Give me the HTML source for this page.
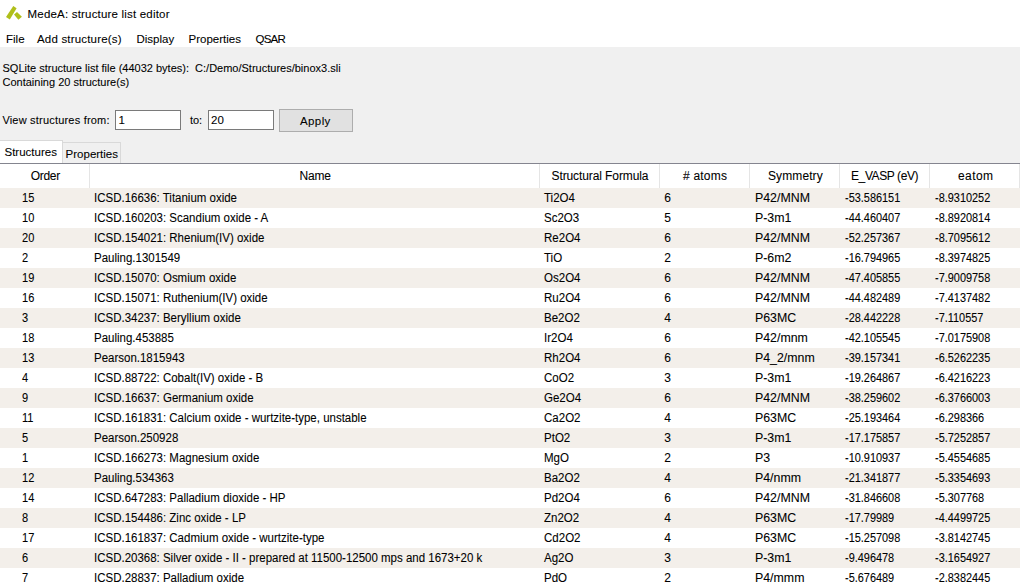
<!DOCTYPE html>
<html><head><meta charset="utf-8"><style>
html,body{margin:0;padding:0;}
body{width:1020px;height:586px;overflow:hidden;position:relative;background:#f0f0f0;font-family:"Liberation Sans",sans-serif;color:#000;}
.t{position:absolute;white-space:nowrap;line-height:1;-webkit-text-stroke:0.08px #000;}
.b{position:absolute;box-sizing:border-box;}
</style></head><body>
<div class="b" style="left:0;top:0;width:1020px;height:47px;background:#fff"></div>
<svg class="b" style="left:0;top:0" width="30" height="26" viewBox="0 0 30 26">
<polygon points="13.3,6.0 16.6,8.2 9.8,19.5 6.0,16.9" fill="#b0bf1a"/>
<polygon points="17,11.9 14.0,14.4 18.4,19.7 21.9,16.7" fill="#b0bf1a"/>
</svg>
<div class="t" style="left:27.60px;top:8.57px;font-size:11.5px;letter-spacing:0.19px">MedeA: structure list editor</div>
<div class="t" style="left:6.00px;top:33.57px;font-size:11.5px;">File</div>
<div class="t" style="left:37.00px;top:33.57px;font-size:11.5px;letter-spacing:0.18px">Add structure(s)</div>
<div class="t" style="left:136.50px;top:33.57px;font-size:11.5px;">Display</div>
<div class="t" style="left:188.50px;top:33.57px;font-size:11.5px;">Properties</div>
<div class="t" style="left:255.60px;top:33.57px;font-size:11.5px;letter-spacing:-0.8px">QSAR</div>
<div class="t" style="left:2.50px;top:63.39px;font-size:11px;white-space:pre">SQLite structure list file (44032 bytes):  C:/Demo/Structures/binox3.sli</div>
<div class="t" style="left:2.50px;top:77.29px;font-size:11px;">Containing 20 structure(s)</div>
<div class="t" style="left:2.40px;top:115.49px;font-size:11px;letter-spacing:0.2px">View structures from:</div>
<div class="t" style="left:189.90px;top:115.49px;font-size:11px;">to:</div>
<div class="b" style="left:115px;top:110px;width:66px;height:20px;background:#fff;border:1px solid #7a7a7a"></div>
<div class="t" style="left:118.50px;top:115.07px;font-size:11.5px;">1</div>
<div class="b" style="left:208px;top:110px;width:66px;height:20px;background:#fff;border:1px solid #7a7a7a"></div>
<div class="t" style="left:211.00px;top:115.07px;font-size:11.5px;">20</div>
<div class="b" style="left:279px;top:109px;width:74px;height:23px;background:#e1e1e1;border:1px solid #adadad"></div>
<div class="t" style="left:300.00px;top:115.57px;font-size:11.5px;letter-spacing:0.4px">Apply</div>
<div class="b" style="left:62px;top:142px;width:59px;height:21px;background:#f0f0f0;border:1px solid #d9d9d9;border-bottom:none;"></div>
<div class="t" style="left:65.60px;top:148.87px;font-size:11.5px;">Properties</div>
<div class="b" style="left:0px;top:140px;width:63px;height:23px;background:#ffffff;border:1px solid #d9d9d9;border-bottom:none;border-left:none"></div>
<div class="t" style="left:4.50px;top:146.77px;font-size:11.5px;">Structures</div>
<div class="b" style="left:0;top:163px;width:1020px;height:1px;background:#84858f"></div>
<div class="b" style="left:0;top:164px;width:1020px;height:422px;background:#fff"></div>
<div class="b" style="left:89px;top:164px;width:1px;height:24px;background:#e5e5e5"></div>
<div class="b" style="left:539px;top:164px;width:1px;height:24px;background:#e5e5e5"></div>
<div class="b" style="left:659px;top:164px;width:1px;height:24px;background:#e5e5e5"></div>
<div class="b" style="left:749px;top:164px;width:1px;height:24px;background:#e5e5e5"></div>
<div class="b" style="left:839px;top:164px;width:1px;height:24px;background:#e5e5e5"></div>
<div class="b" style="left:929px;top:164px;width:1px;height:24px;background:#e5e5e5"></div>
<div class="b" style="left:1019px;top:164px;width:1px;height:24px;background:#e5e5e5"></div>
<div class="t" style="left:30.70px;top:169.84px;font-size:12px;letter-spacing:-0.3px">Order</div>
<div class="t" style="left:299.50px;top:169.84px;font-size:12px;letter-spacing:-0.2px">Name</div>
<div class="t" style="left:551.50px;top:169.84px;font-size:12px;letter-spacing:-0.1px">Structural Formula</div>
<div class="t" style="left:683.00px;top:169.84px;font-size:12px;letter-spacing:0.2px"># atoms</div>
<div class="t" style="left:768.00px;top:169.84px;font-size:12px;letter-spacing:0.1px">Symmetry</div>
<div class="t" style="left:851.00px;top:169.84px;font-size:12px;letter-spacing:-0.4px">E_VASP (eV)</div>
<div class="t" style="left:958.00px;top:169.84px;font-size:12px;letter-spacing:0.4px">eatom</div>
<div class="b" style="left:0;top:188px;width:1020px;height:20px;background:#f3efea"></div>
<div class="t" style="left:22.00px;top:191.74px;font-size:12px;transform:scaleX(0.92);transform-origin:0 0">15</div>
<div class="t" style="left:94.00px;top:191.74px;font-size:12px;transform:scaleX(0.957);transform-origin:0 0">ICSD.16636: Titanium oxide</div>
<div class="t" style="left:543.80px;top:191.74px;font-size:12px;transform:scaleX(0.96);transform-origin:0 0">Ti2O4</div>
<div class="t" style="left:664.20px;top:191.74px;font-size:12px;">6</div>
<div class="t" style="left:754.90px;top:191.74px;font-size:12px;transform:scaleX(1.03);transform-origin:0 0">P42/MNM</div>
<div class="t" style="left:845.00px;top:191.74px;font-size:12px;transform:scaleX(0.91);transform-origin:0 0">-53.586151</div>
<div class="t" style="left:935.40px;top:191.74px;font-size:12px;transform:scaleX(0.91);transform-origin:0 0">-8.9310252</div>
<div class="t" style="left:22.00px;top:211.74px;font-size:12px;transform:scaleX(0.92);transform-origin:0 0">10</div>
<div class="t" style="left:94.00px;top:211.74px;font-size:12px;transform:scaleX(0.957);transform-origin:0 0">ICSD.160203: Scandium oxide - A</div>
<div class="t" style="left:543.80px;top:211.74px;font-size:12px;transform:scaleX(0.96);transform-origin:0 0">Sc2O3</div>
<div class="t" style="left:664.20px;top:211.74px;font-size:12px;">5</div>
<div class="t" style="left:754.90px;top:211.74px;font-size:12px;transform:scaleX(1.03);transform-origin:0 0">P-3m1</div>
<div class="t" style="left:845.00px;top:211.74px;font-size:12px;transform:scaleX(0.91);transform-origin:0 0">-44.460407</div>
<div class="t" style="left:935.40px;top:211.74px;font-size:12px;transform:scaleX(0.91);transform-origin:0 0">-8.8920814</div>
<div class="b" style="left:0;top:228px;width:1020px;height:20px;background:#f3efea"></div>
<div class="t" style="left:22.00px;top:231.74px;font-size:12px;transform:scaleX(0.92);transform-origin:0 0">20</div>
<div class="t" style="left:94.00px;top:231.74px;font-size:12px;transform:scaleX(0.957);transform-origin:0 0">ICSD.154021: Rhenium(IV) oxide</div>
<div class="t" style="left:543.80px;top:231.74px;font-size:12px;transform:scaleX(0.96);transform-origin:0 0">Re2O4</div>
<div class="t" style="left:664.20px;top:231.74px;font-size:12px;">6</div>
<div class="t" style="left:754.90px;top:231.74px;font-size:12px;transform:scaleX(1.03);transform-origin:0 0">P42/MNM</div>
<div class="t" style="left:845.00px;top:231.74px;font-size:12px;transform:scaleX(0.91);transform-origin:0 0">-52.257367</div>
<div class="t" style="left:935.40px;top:231.74px;font-size:12px;transform:scaleX(0.91);transform-origin:0 0">-8.7095612</div>
<div class="t" style="left:22.00px;top:251.74px;font-size:12px;transform:scaleX(0.92);transform-origin:0 0">2</div>
<div class="t" style="left:94.00px;top:251.74px;font-size:12px;transform:scaleX(0.957);transform-origin:0 0">Pauling.1301549</div>
<div class="t" style="left:543.80px;top:251.74px;font-size:12px;transform:scaleX(0.96);transform-origin:0 0">TiO</div>
<div class="t" style="left:664.20px;top:251.74px;font-size:12px;">2</div>
<div class="t" style="left:754.90px;top:251.74px;font-size:12px;transform:scaleX(1.03);transform-origin:0 0">P-6m2</div>
<div class="t" style="left:845.00px;top:251.74px;font-size:12px;transform:scaleX(0.91);transform-origin:0 0">-16.794965</div>
<div class="t" style="left:935.40px;top:251.74px;font-size:12px;transform:scaleX(0.91);transform-origin:0 0">-8.3974825</div>
<div class="b" style="left:0;top:268px;width:1020px;height:20px;background:#f3efea"></div>
<div class="t" style="left:22.00px;top:271.74px;font-size:12px;transform:scaleX(0.92);transform-origin:0 0">19</div>
<div class="t" style="left:94.00px;top:271.74px;font-size:12px;transform:scaleX(0.957);transform-origin:0 0">ICSD.15070: Osmium oxide</div>
<div class="t" style="left:543.80px;top:271.74px;font-size:12px;transform:scaleX(0.96);transform-origin:0 0">Os2O4</div>
<div class="t" style="left:664.20px;top:271.74px;font-size:12px;">6</div>
<div class="t" style="left:754.90px;top:271.74px;font-size:12px;transform:scaleX(1.03);transform-origin:0 0">P42/MNM</div>
<div class="t" style="left:845.00px;top:271.74px;font-size:12px;transform:scaleX(0.91);transform-origin:0 0">-47.405855</div>
<div class="t" style="left:935.40px;top:271.74px;font-size:12px;transform:scaleX(0.91);transform-origin:0 0">-7.9009758</div>
<div class="t" style="left:22.00px;top:291.74px;font-size:12px;transform:scaleX(0.92);transform-origin:0 0">16</div>
<div class="t" style="left:94.00px;top:291.74px;font-size:12px;transform:scaleX(0.957);transform-origin:0 0">ICSD.15071: Ruthenium(IV) oxide</div>
<div class="t" style="left:543.80px;top:291.74px;font-size:12px;transform:scaleX(0.96);transform-origin:0 0">Ru2O4</div>
<div class="t" style="left:664.20px;top:291.74px;font-size:12px;">6</div>
<div class="t" style="left:754.90px;top:291.74px;font-size:12px;transform:scaleX(1.03);transform-origin:0 0">P42/MNM</div>
<div class="t" style="left:845.00px;top:291.74px;font-size:12px;transform:scaleX(0.91);transform-origin:0 0">-44.482489</div>
<div class="t" style="left:935.40px;top:291.74px;font-size:12px;transform:scaleX(0.91);transform-origin:0 0">-7.4137482</div>
<div class="b" style="left:0;top:308px;width:1020px;height:20px;background:#f3efea"></div>
<div class="t" style="left:22.00px;top:311.74px;font-size:12px;transform:scaleX(0.92);transform-origin:0 0">3</div>
<div class="t" style="left:94.00px;top:311.74px;font-size:12px;transform:scaleX(0.957);transform-origin:0 0">ICSD.34237: Beryllium oxide</div>
<div class="t" style="left:543.80px;top:311.74px;font-size:12px;transform:scaleX(0.96);transform-origin:0 0">Be2O2</div>
<div class="t" style="left:664.20px;top:311.74px;font-size:12px;">4</div>
<div class="t" style="left:754.90px;top:311.74px;font-size:12px;transform:scaleX(1.03);transform-origin:0 0">P63MC</div>
<div class="t" style="left:845.00px;top:311.74px;font-size:12px;transform:scaleX(0.91);transform-origin:0 0">-28.442228</div>
<div class="t" style="left:935.40px;top:311.74px;font-size:12px;transform:scaleX(0.91);transform-origin:0 0">-7.110557</div>
<div class="t" style="left:22.00px;top:331.74px;font-size:12px;transform:scaleX(0.92);transform-origin:0 0">18</div>
<div class="t" style="left:94.00px;top:331.74px;font-size:12px;transform:scaleX(0.957);transform-origin:0 0">Pauling.453885</div>
<div class="t" style="left:543.80px;top:331.74px;font-size:12px;transform:scaleX(0.96);transform-origin:0 0">Ir2O4</div>
<div class="t" style="left:664.20px;top:331.74px;font-size:12px;">6</div>
<div class="t" style="left:754.90px;top:331.74px;font-size:12px;transform:scaleX(1.03);transform-origin:0 0">P42/mnm</div>
<div class="t" style="left:845.00px;top:331.74px;font-size:12px;transform:scaleX(0.91);transform-origin:0 0">-42.105545</div>
<div class="t" style="left:935.40px;top:331.74px;font-size:12px;transform:scaleX(0.91);transform-origin:0 0">-7.0175908</div>
<div class="b" style="left:0;top:348px;width:1020px;height:20px;background:#f3efea"></div>
<div class="t" style="left:22.00px;top:351.74px;font-size:12px;transform:scaleX(0.92);transform-origin:0 0">13</div>
<div class="t" style="left:94.00px;top:351.74px;font-size:12px;transform:scaleX(0.957);transform-origin:0 0">Pearson.1815943</div>
<div class="t" style="left:543.80px;top:351.74px;font-size:12px;transform:scaleX(0.96);transform-origin:0 0">Rh2O4</div>
<div class="t" style="left:664.20px;top:351.74px;font-size:12px;">6</div>
<div class="t" style="left:754.90px;top:351.74px;font-size:12px;transform:scaleX(1.03);transform-origin:0 0">P4_2/mnm</div>
<div class="t" style="left:845.00px;top:351.74px;font-size:12px;transform:scaleX(0.91);transform-origin:0 0">-39.157341</div>
<div class="t" style="left:935.40px;top:351.74px;font-size:12px;transform:scaleX(0.91);transform-origin:0 0">-6.5262235</div>
<div class="t" style="left:22.00px;top:371.74px;font-size:12px;transform:scaleX(0.92);transform-origin:0 0">4</div>
<div class="t" style="left:94.00px;top:371.74px;font-size:12px;transform:scaleX(0.957);transform-origin:0 0">ICSD.88722: Cobalt(IV) oxide - B</div>
<div class="t" style="left:543.80px;top:371.74px;font-size:12px;transform:scaleX(0.96);transform-origin:0 0">CoO2</div>
<div class="t" style="left:664.20px;top:371.74px;font-size:12px;">3</div>
<div class="t" style="left:754.90px;top:371.74px;font-size:12px;transform:scaleX(1.03);transform-origin:0 0">P-3m1</div>
<div class="t" style="left:845.00px;top:371.74px;font-size:12px;transform:scaleX(0.91);transform-origin:0 0">-19.264867</div>
<div class="t" style="left:935.40px;top:371.74px;font-size:12px;transform:scaleX(0.91);transform-origin:0 0">-6.4216223</div>
<div class="b" style="left:0;top:388px;width:1020px;height:20px;background:#f3efea"></div>
<div class="t" style="left:22.00px;top:391.74px;font-size:12px;transform:scaleX(0.92);transform-origin:0 0">9</div>
<div class="t" style="left:94.00px;top:391.74px;font-size:12px;transform:scaleX(0.957);transform-origin:0 0">ICSD.16637: Germanium oxide</div>
<div class="t" style="left:543.80px;top:391.74px;font-size:12px;transform:scaleX(0.96);transform-origin:0 0">Ge2O4</div>
<div class="t" style="left:664.20px;top:391.74px;font-size:12px;">6</div>
<div class="t" style="left:754.90px;top:391.74px;font-size:12px;transform:scaleX(1.03);transform-origin:0 0">P42/MNM</div>
<div class="t" style="left:845.00px;top:391.74px;font-size:12px;transform:scaleX(0.91);transform-origin:0 0">-38.259602</div>
<div class="t" style="left:935.40px;top:391.74px;font-size:12px;transform:scaleX(0.91);transform-origin:0 0">-6.3766003</div>
<div class="t" style="left:22.00px;top:411.74px;font-size:12px;transform:scaleX(0.92);transform-origin:0 0">11</div>
<div class="t" style="left:94.00px;top:411.74px;font-size:12px;transform:scaleX(0.957);transform-origin:0 0">ICSD.161831: Calcium oxide - wurtzite-type, unstable</div>
<div class="t" style="left:543.80px;top:411.74px;font-size:12px;transform:scaleX(0.96);transform-origin:0 0">Ca2O2</div>
<div class="t" style="left:664.20px;top:411.74px;font-size:12px;">4</div>
<div class="t" style="left:754.90px;top:411.74px;font-size:12px;transform:scaleX(1.03);transform-origin:0 0">P63MC</div>
<div class="t" style="left:845.00px;top:411.74px;font-size:12px;transform:scaleX(0.91);transform-origin:0 0">-25.193464</div>
<div class="t" style="left:935.40px;top:411.74px;font-size:12px;transform:scaleX(0.91);transform-origin:0 0">-6.298366</div>
<div class="b" style="left:0;top:428px;width:1020px;height:20px;background:#f3efea"></div>
<div class="t" style="left:22.00px;top:431.74px;font-size:12px;transform:scaleX(0.92);transform-origin:0 0">5</div>
<div class="t" style="left:94.00px;top:431.74px;font-size:12px;transform:scaleX(0.957);transform-origin:0 0">Pearson.250928</div>
<div class="t" style="left:543.80px;top:431.74px;font-size:12px;transform:scaleX(0.96);transform-origin:0 0">PtO2</div>
<div class="t" style="left:664.20px;top:431.74px;font-size:12px;">3</div>
<div class="t" style="left:754.90px;top:431.74px;font-size:12px;transform:scaleX(1.03);transform-origin:0 0">P-3m1</div>
<div class="t" style="left:845.00px;top:431.74px;font-size:12px;transform:scaleX(0.91);transform-origin:0 0">-17.175857</div>
<div class="t" style="left:935.40px;top:431.74px;font-size:12px;transform:scaleX(0.91);transform-origin:0 0">-5.7252857</div>
<div class="t" style="left:22.00px;top:451.74px;font-size:12px;transform:scaleX(0.92);transform-origin:0 0">1</div>
<div class="t" style="left:94.00px;top:451.74px;font-size:12px;transform:scaleX(0.957);transform-origin:0 0">ICSD.166273: Magnesium oxide</div>
<div class="t" style="left:543.80px;top:451.74px;font-size:12px;transform:scaleX(0.96);transform-origin:0 0">MgO</div>
<div class="t" style="left:664.20px;top:451.74px;font-size:12px;">2</div>
<div class="t" style="left:754.90px;top:451.74px;font-size:12px;transform:scaleX(1.03);transform-origin:0 0">P3</div>
<div class="t" style="left:845.00px;top:451.74px;font-size:12px;transform:scaleX(0.91);transform-origin:0 0">-10.910937</div>
<div class="t" style="left:935.40px;top:451.74px;font-size:12px;transform:scaleX(0.91);transform-origin:0 0">-5.4554685</div>
<div class="b" style="left:0;top:468px;width:1020px;height:20px;background:#f3efea"></div>
<div class="t" style="left:22.00px;top:471.74px;font-size:12px;transform:scaleX(0.92);transform-origin:0 0">12</div>
<div class="t" style="left:94.00px;top:471.74px;font-size:12px;transform:scaleX(0.957);transform-origin:0 0">Pauling.534363</div>
<div class="t" style="left:543.80px;top:471.74px;font-size:12px;transform:scaleX(0.96);transform-origin:0 0">Ba2O2</div>
<div class="t" style="left:664.20px;top:471.74px;font-size:12px;">4</div>
<div class="t" style="left:754.90px;top:471.74px;font-size:12px;transform:scaleX(1.03);transform-origin:0 0">P4/nmm</div>
<div class="t" style="left:845.00px;top:471.74px;font-size:12px;transform:scaleX(0.91);transform-origin:0 0">-21.341877</div>
<div class="t" style="left:935.40px;top:471.74px;font-size:12px;transform:scaleX(0.91);transform-origin:0 0">-5.3354693</div>
<div class="t" style="left:22.00px;top:491.74px;font-size:12px;transform:scaleX(0.92);transform-origin:0 0">14</div>
<div class="t" style="left:94.00px;top:491.74px;font-size:12px;transform:scaleX(0.957);transform-origin:0 0">ICSD.647283: Palladium dioxide - HP</div>
<div class="t" style="left:543.80px;top:491.74px;font-size:12px;transform:scaleX(0.96);transform-origin:0 0">Pd2O4</div>
<div class="t" style="left:664.20px;top:491.74px;font-size:12px;">6</div>
<div class="t" style="left:754.90px;top:491.74px;font-size:12px;transform:scaleX(1.03);transform-origin:0 0">P42/MNM</div>
<div class="t" style="left:845.00px;top:491.74px;font-size:12px;transform:scaleX(0.91);transform-origin:0 0">-31.846608</div>
<div class="t" style="left:935.40px;top:491.74px;font-size:12px;transform:scaleX(0.91);transform-origin:0 0">-5.307768</div>
<div class="b" style="left:0;top:508px;width:1020px;height:20px;background:#f3efea"></div>
<div class="t" style="left:22.00px;top:511.74px;font-size:12px;transform:scaleX(0.92);transform-origin:0 0">8</div>
<div class="t" style="left:94.00px;top:511.74px;font-size:12px;transform:scaleX(0.957);transform-origin:0 0">ICSD.154486: Zinc oxide - LP</div>
<div class="t" style="left:543.80px;top:511.74px;font-size:12px;transform:scaleX(0.96);transform-origin:0 0">Zn2O2</div>
<div class="t" style="left:664.20px;top:511.74px;font-size:12px;">4</div>
<div class="t" style="left:754.90px;top:511.74px;font-size:12px;transform:scaleX(1.03);transform-origin:0 0">P63MC</div>
<div class="t" style="left:845.00px;top:511.74px;font-size:12px;transform:scaleX(0.91);transform-origin:0 0">-17.79989</div>
<div class="t" style="left:935.40px;top:511.74px;font-size:12px;transform:scaleX(0.91);transform-origin:0 0">-4.4499725</div>
<div class="t" style="left:22.00px;top:531.74px;font-size:12px;transform:scaleX(0.92);transform-origin:0 0">17</div>
<div class="t" style="left:94.00px;top:531.74px;font-size:12px;transform:scaleX(0.957);transform-origin:0 0">ICSD.161837: Cadmium oxide - wurtzite-type</div>
<div class="t" style="left:543.80px;top:531.74px;font-size:12px;transform:scaleX(0.96);transform-origin:0 0">Cd2O2</div>
<div class="t" style="left:664.20px;top:531.74px;font-size:12px;">4</div>
<div class="t" style="left:754.90px;top:531.74px;font-size:12px;transform:scaleX(1.03);transform-origin:0 0">P63MC</div>
<div class="t" style="left:845.00px;top:531.74px;font-size:12px;transform:scaleX(0.91);transform-origin:0 0">-15.257098</div>
<div class="t" style="left:935.40px;top:531.74px;font-size:12px;transform:scaleX(0.91);transform-origin:0 0">-3.8142745</div>
<div class="b" style="left:0;top:548px;width:1020px;height:20px;background:#f3efea"></div>
<div class="t" style="left:22.00px;top:551.74px;font-size:12px;transform:scaleX(0.92);transform-origin:0 0">6</div>
<div class="t" style="left:94.00px;top:551.74px;font-size:12px;transform:scaleX(0.957);transform-origin:0 0">ICSD.20368: Silver oxide - II - prepared at 11500-12500 mps and 1673+20 k</div>
<div class="t" style="left:543.80px;top:551.74px;font-size:12px;transform:scaleX(0.96);transform-origin:0 0">Ag2O</div>
<div class="t" style="left:664.20px;top:551.74px;font-size:12px;">3</div>
<div class="t" style="left:754.90px;top:551.74px;font-size:12px;transform:scaleX(1.03);transform-origin:0 0">P-3m1</div>
<div class="t" style="left:845.00px;top:551.74px;font-size:12px;transform:scaleX(0.91);transform-origin:0 0">-9.496478</div>
<div class="t" style="left:935.40px;top:551.74px;font-size:12px;transform:scaleX(0.91);transform-origin:0 0">-3.1654927</div>
<div class="t" style="left:22.00px;top:571.74px;font-size:12px;transform:scaleX(0.92);transform-origin:0 0">7</div>
<div class="t" style="left:94.00px;top:571.74px;font-size:12px;transform:scaleX(0.957);transform-origin:0 0">ICSD.28837: Palladium oxide</div>
<div class="t" style="left:543.80px;top:571.74px;font-size:12px;transform:scaleX(0.96);transform-origin:0 0">PdO</div>
<div class="t" style="left:664.20px;top:571.74px;font-size:12px;">2</div>
<div class="t" style="left:754.90px;top:571.74px;font-size:12px;transform:scaleX(1.03);transform-origin:0 0">P4/mmm</div>
<div class="t" style="left:845.00px;top:571.74px;font-size:12px;transform:scaleX(0.91);transform-origin:0 0">-5.676489</div>
<div class="t" style="left:935.40px;top:571.74px;font-size:12px;transform:scaleX(0.91);transform-origin:0 0">-2.8382445</div>
</body></html>
